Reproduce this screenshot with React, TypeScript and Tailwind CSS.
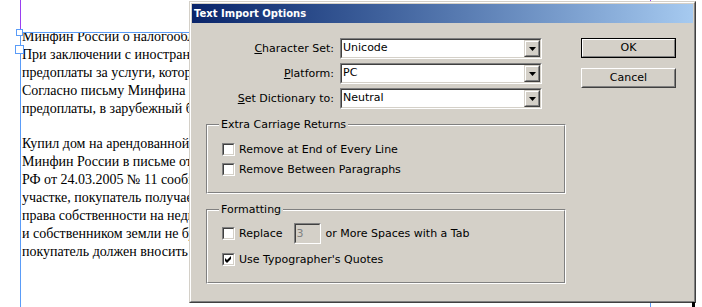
import React from "react"

const para1 = [
  "Минфин России о налогообложении услуг иностранных организаций",
  "При заключении с иностранной организацией договора на условиях",
  "предоплаты за услуги, которые будут оказаны на территории России,",
  "Согласно письму Минфина России налог удерживается в момент",
  "предоплаты, в зарубежный банк перечисляется сумма без налога.",
]

const para2 = [
  "Купил дом на арендованной земле: надо ли платить земельный налог",
  "Минфин России в письме от 12.04.2005 со ссылкой на постановление Пленума ВАС",
  "РФ от 24.03.2005 № 11 сообщает, что при покупке дома, расположенного на",
  "участке, покупатель получает право пользования участком с момента регистрации",
  "права собственности на недвижимость. До оформления договора аренды между ним",
  "и собственником земли не будет правоотношений, поэтому до этого момента",
  "покупатель должен вносить земельный налог.",
]

function DropButton() {
  return (
    <div className="w-[16px] h-[17px] border border-t-[#d4d0c8] border-l-[#d4d0c8] border-r-[#404040] border-b-[#404040]">
      <div className="h-full flex items-center justify-center bg-[#d4d0c8] border border-t-white border-l-white border-r-[#808080] border-b-[#808080]">
        <svg width="7" height="4" viewBox="0 0 7 4">
          <polygon points="0,0 7,0 3.5,4" fill="#000" />
        </svg>
      </div>
    </div>
  )
}

function Combo({ value }: { value: string }) {
  return (
    <div className="w-[202px] h-[21px] border border-t-[#808080] border-l-[#808080] border-r-white border-b-white">
      <div className="h-full flex items-center bg-white border border-t-[#404040] border-l-[#404040] border-r-[#d4d0c8] border-b-[#d4d0c8]">
        <span className="flex-1 pl-[1px]">{value}</span>
        <DropButton />
      </div>
    </div>
  )
}

function Checkbox({ checked = false }: { checked?: boolean }) {
  return (
    <div className="w-[13px] h-[13px] shrink-0 border border-t-[#808080] border-l-[#808080] border-r-white border-b-white">
      <div className="h-full bg-white border border-t-[#404040] border-l-[#404040] border-r-[#d4d0c8] border-b-[#d4d0c8]">
        {checked && (
          <svg width="9" height="9" viewBox="0 0 9 9">
            <polygon points="1,3 3,5 7,1 7,4 3,8 1,6" fill="#000" />
          </svg>
        )}
      </div>
    </div>
  )
}

function Group({ title, height, children }: { title: string; height: string; children: React.ReactNode }) {
  return (
    <div className={`relative ${height} border border-t-[#808080] border-l-[#808080] border-r-white border-b-white`}>
      <div className="h-full border border-t-white border-l-white border-r-[#808080] border-b-[#808080]">
        {children}
      </div>
      {/* legend sits over the etched line */}
      <span className="absolute left-[12px] top-[-7px] px-[2px] leading-[13px] bg-[#d4d0c8]">{title}</span>
    </div>
  )
}

function Row({ label, value }: { label: React.ReactNode; value: string }) {
  return (
    <div className="flex items-center">
      <div className="w-[128px] text-right leading-[13px]">{label}</div>
      <div className="ml-[6px]">
        <Combo value={value} />
      </div>
    </div>
  )
}

function CheckRow({ label, checked }: { label: string; checked?: boolean }) {
  return (
    <div className="flex items-center h-[13px] gap-[4px]">
      <Checkbox checked={checked} />
      <span className="leading-[13px]">{label}</span>
    </div>
  )
}

export default function App() {
  return (
    <div className="relative w-[702px] h-[307px] bg-white overflow-hidden">
      {/* text frame */}
      <div className="ml-[20px] mt-[32px] w-[631px] h-[275px] border-l border-t border-[#5a9cf8] overflow-hidden font-['Liberation_Serif',serif] text-[14px] text-black">
        <div className="-mt-[5px] pl-px">
          <div className="leading-[18px]">
            {para1.map((l, i) => (
              <div key={i} className="whitespace-nowrap">{l}</div>
            ))}
          </div>
          <div className="mt-[17px] leading-[18px]">
            {para2.map((l, i) => (
              <div key={i} className="whitespace-nowrap">{l}</div>
            ))}
          </div>
        </div>
      </div>

      {/* guides and frame handles */}
      <div className="absolute left-[20px] top-0 w-px h-[32px] bg-[#9a3ff0]" />
      <div className="absolute left-[650px] top-0 w-px h-[32px] bg-[#9a3ff0]" />
      <div className="absolute left-[650px] top-[32px] w-px h-[275px] bg-[#5a9cf8]" />
      <div className="absolute left-[16px] top-[29px] w-[7px] h-[7px] bg-white border border-[#5a9cf8]" />
      <div className="absolute left-[15px] top-[45px] w-[9px] h-[9px] bg-white border border-[#5a9cf8]" />

      {/* dialog window */}
      <div className="absolute left-[189px] top-[1px] w-[507px] h-[302px] border border-t-[#d4d0c8] border-l-[#d4d0c8] border-r-[#404040] border-b-[#404040] font-['DejaVu_Sans',sans-serif] text-[11px] text-black">
        <div className="h-full bg-[#d4d0c8] p-px border border-t-white border-l-white border-r-[#808080] border-b-[#808080]">
          <div className="h-[19px] flex items-center pl-[2px] bg-gradient-to-r from-[#0a246a] to-[#a6caf0] text-white font-bold text-[10px]">
            Text Import Options
          </div>

          <div className="flex pt-[15px] pl-[14px]">
            <div className="w-[360px]">
              <div className="flex flex-col gap-[4px]">
                <Row label={<><u>C</u>haracter Set:</>} value="Unicode" />
                <Row label={<><u>P</u>latform:</>} value="PC" />
                <Row label={<><u>S</u>et Dictionary to:</>} value="Neutral" />
              </div>

              <div className="mt-[15px]">
                <Group title="Extra Carriage Returns" height="h-[70px]">
                  <div className="flex flex-col gap-[7px] pt-[17px] pl-[14px]">
                    <CheckRow label="Remove at End of Every Line" />
                    <CheckRow label="Remove Between Paragraphs" />
                  </div>
                </Group>
              </div>

              <div className="mt-[15px]">
                <Group title="Formatting" height="h-[75px]">
                  <div className="flex flex-col gap-[9px] pt-[12px] pl-[14px]">
                    <div className="flex items-center h-[21px]">
                      <Checkbox />
                      <span className="ml-[4px] leading-[13px]">Replace</span>
                      <div className="ml-[11px] w-[27px] h-[21px] border border-t-[#808080] border-l-[#808080] border-r-white border-b-white">
                        <div className="h-full flex items-center pl-[1px] leading-[13px] text-[#808080] border border-t-[#404040] border-l-[#404040] border-r-[#d4d0c8] border-b-[#d4d0c8]">
                          3
                        </div>
                      </div>
                      <span className="ml-[5px] leading-[13px]">or More Spaces with a Tab</span>
                    </div>
                    <CheckRow label="Use Typographer's Quotes" checked />
                  </div>
                </Group>
              </div>
            </div>

            <div className="ml-[15px] flex flex-col gap-[10px] w-[95px]">
              <button className="h-[20px] border border-black">
                <div className="h-full flex items-center justify-center border border-t-white border-l-white border-r-[#808080] border-b-[#808080]">
                  OK
                </div>
              </button>
              <button className="h-[20px] border border-t-white border-l-white border-r-[#404040] border-b-[#404040]">
                <div className="h-full flex items-center justify-center border border-t-[#d4d0c8] border-l-[#d4d0c8] border-r-[#808080] border-b-[#808080]">
                  Cancel
                </div>
              </button>
            </div>
          </div>
        </div>
      </div>
      <div className="absolute left-[692px] top-[302px] w-[3px] h-[5px] bg-black" />
    </div>
  )
}
